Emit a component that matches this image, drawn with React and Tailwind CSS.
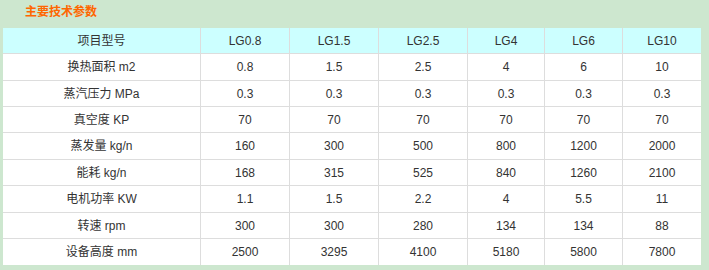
const COLS = ['w-[198px]', 'w-[89px]', 'w-[89px]', 'w-[89px]', 'w-[77px]', 'w-[78px]', 'w-[78px]'];

const HEAD = ['项目型号', 'LG0.8', 'LG1.5', 'LG2.5', 'LG4', 'LG6', 'LG10'];

// heights include the 1px bottom line
const ROWS = [
  { h: 'h-[27px]', cells: ['换热面积 m2', '0.8', '1.5', '2.5', '4', '6', '10'] },
  { h: 'h-[26px]', cells: ['蒸汽压力 MPa', '0.3', '0.3', '0.3', '0.3', '0.3', '0.3'] },
  { h: 'h-[26px]', cells: ['真空度 KP', '70', '70', '70', '70', '70', '70'] },
  { h: 'h-[27px]', cells: ['蒸发量 kg/n', '160', '300', '500', '800', '1200', '2000'] },
  { h: 'h-[26px]', cells: ['能耗 kg/n', '168', '315', '525', '840', '1260', '2100'] },
  { h: 'h-[27px]', cells: ['电机功率 KW', '1.1', '1.5', '2.2', '4', '5.5', '11'] },
  { h: 'h-[26px]', cells: ['转速 rpm', '300', '300', '280', '134', '134', '88'] },
  { h: 'h-[26px]', cells: ['设备高度 mm', '2500', '3295', '4100', '5180', '5800', '7800'], last: true },
];

function Row({ cells, h, head, last }) {
  return (
    <div className={`flex ${h} ${last ? '' : 'border-b border-[#dddddd]'} ${head ? 'bg-[#ccffff]' : 'bg-white'}`}>
      {cells.map((c, i) => (
        <div
          key={i}
          className={`${COLS[i]} shrink-0 flex items-center justify-center ${i < cells.length - 1 ? 'border-r border-[#dddddd]' : ''}`}
        >
          {c}
        </div>
      ))}
    </div>
  );
}

export default function App() {
  return (
    <div
      className="w-[709px] h-[270px] bg-[#cde7cf] text-[12px] text-[#333333] overflow-hidden"
      style={{ fontFamily: '"Liberation Sans", "Noto Sans CJK SC", sans-serif' }}
    >
      {/* ── title ── */}
      <div className="h-[28px] pl-[25px] pt-[4px] leading-[16px] font-bold text-[#ff6600]">主要技术参数</div>

      {/* ── spec table ── */}
      <div className="ml-[3px] w-[698px]">
        <Row cells={HEAD} h="h-[26px]" head />
        {ROWS.map((r, i) => (
          <Row key={i} cells={r.cells} h={r.h} last={r.last} />
        ))}
      </div>
    </div>
  );
}
